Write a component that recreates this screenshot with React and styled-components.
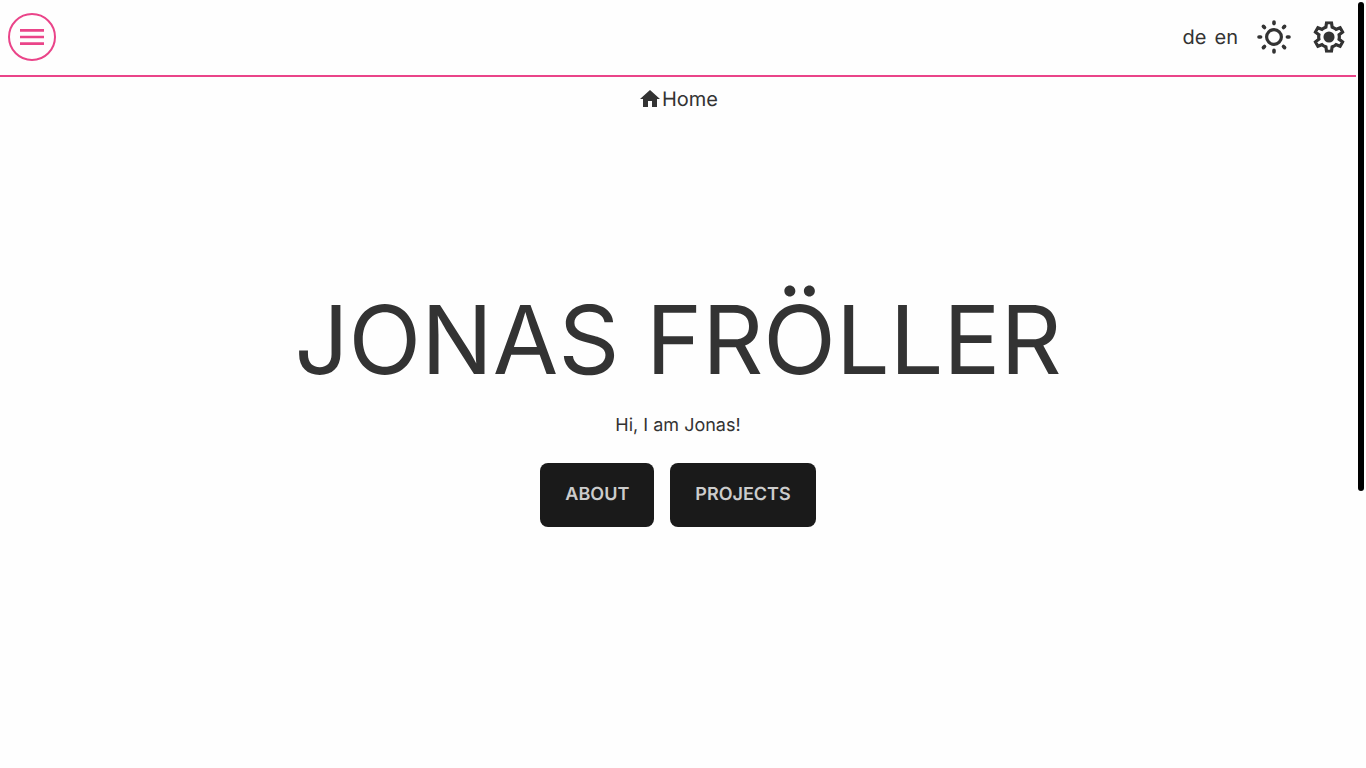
import React from 'react'
import styled, { createGlobalStyle } from 'styled-components'
import { MdHome, MdMenu } from 'react-icons/md'

const GlobalStyle = createGlobalStyle`
    * {
        box-sizing: border-box;
    }
    body {
        margin: 0;
        background-color: #fefefe;
        color: #333;
        font-family: Inter, "Liberation Sans", sans-serif;
        text-rendering: geometricPrecision;
    }
    h1, p {
        margin: 0;
    }
`;

const Container = styled.div`
    display: flex;
    height: 100vh;
    overflow: hidden;
`;

const Page = styled.div`
    flex: 1;
    display: flex;
    flex-direction: column;
`;

const ScrollTrack = styled.div`
    width: 10px;
    padding: 2px;
`;

const ScrollThumb = styled.div`
    height: 64%;
    border-radius: 3px;
    background-color: #000;
`;

const Header = styled.header`
    display: flex;
    align-items: center;
    justify-content: space-between;
    padding: 13px 8px 14px;
    border-bottom: 2px solid #ea4489;
`;

const MenuButton = styled.button`
    display: flex;
    align-items: center;
    justify-content: center;
    width: 48px;
    height: 48px;
    padding: 0;
    border: 2px solid #ea4489;
    border-radius: 50%;
    background: none;
    color: #ea4489;
    font-size: 32px;
    cursor: pointer;
`;

const Tools = styled.div`
    display: flex;
    align-items: center;
    gap: 17px;
`;

const Languages = styled.nav`
    display: flex;
    gap: 8px;
`;

const TextLink = styled.a`
    display: flex;
    align-items: center;
    color: inherit;
    font-size: 20px;
    line-height: 28px;
    text-decoration: none;
`;

const IconButton = styled.button`
    display: flex;
    padding: 0;
    border: none;
    background: none;
    color: inherit;
    cursor: pointer;
`;

const Breadcrumb = styled.nav`
    display: flex;
    justify-content: center;
    padding-top: 8px;
`;

const HomeIcon = styled(MdHome)`
    font-size: 24px;
`;

const Hero = styled.main`
    flex: 1;
    display: flex;
    flex-direction: column;
    align-items: center;
    justify-content: center;
    padding-bottom: 71px;
`;

const Title = styled.h1`
    font-size: 95px;
    font-weight: 400;
    line-height: 112px;
    text-transform: uppercase;
`;

const Desc = styled.p`
    margin-top: 16px;
    font-size: 18px;
    line-height: 28px;
`;

const Actions = styled.div`
    display: flex;
    gap: 16px;
    margin-top: 23px;
`;

const Button = styled.a`
    padding: 18px 25px;
    border-radius: 8px;
    background-color: #1a1a1a;
    color: #ccc;
    font-size: 18px;
    font-weight: 600;
    line-height: 28px;
    text-decoration: none;
    text-transform: uppercase;
`;

const angles = [0, 45, 90, 135, 180, 225, 270, 315];

const gear = 'M19.44 12.99c.06-.34.09-.67.09-1.01 0-.34-.03-.67-.08-.99l2.45-1.9-2.43-4.22-2.87 1.16c-.52-.4-1.09-.73-1.7-.99L14.44 2H9.57l-.44 3.07c-.61.26-1.18.59-1.7.99L4.56 4.89 2.12 9.11l2.44 1.9c-.05.32-.07.65-.07.99 0 .34.03.67.08.97l-2.44 1.91 2.43 4.2 2.88-1.15c.52.4 1.09.74 1.7 1L9.58 22h4.85l.44-3.07c.61-.26 1.19-.6 1.71-1l2.88 1.15 2.43-4.2z';

const SunIcon = () => (
    <svg width="38" height="38" viewBox="-19 -19 38 38" fill="none" stroke="currentColor">
        <circle r="7.4" strokeWidth="3.2" />
        {angles.map((angle) => (
            <path key={angle} d="M0-15v1.6" strokeWidth="3.6" strokeLinecap="round" transform={`rotate(${angle})`} />
        ))}
    </svg>
);

const GearIcon = () => (
    <svg width="38" height="38" viewBox="0 0 24 24">
        <clipPath id="gear-edge">
            <path d={gear} />
        </clipPath>
        <path d={gear} fill="none" stroke="currentColor" strokeWidth="4" clipPath="url(#gear-edge)" />
        <circle cx="12" cy="12" r="3.5" fill="currentColor" />
    </svg>
);

const App = () => {
  return (
    <>
        <GlobalStyle />
        <Container>
            <Page>
                <Header>
                    <MenuButton aria-label="Menu"><MdMenu /></MenuButton>
                    <Tools>
                        <Languages>
                            <TextLink href="#de">de</TextLink>
                            <TextLink href="#en">en</TextLink>
                        </Languages>
                        <IconButton aria-label="Theme"><SunIcon /></IconButton>
                        <IconButton aria-label="Settings"><GearIcon /></IconButton>
                    </Tools>
                </Header>
                <Breadcrumb>
                    <TextLink href="#home"><HomeIcon />Home</TextLink>
                </Breadcrumb>
                <Hero>
                    <Title>Jonas Fröller</Title>
                    <Desc>Hi, I am Jonas!</Desc>
                    <Actions>
                        <Button href="#about">About</Button>
                        <Button href="#projects">Projects</Button>
                    </Actions>
                </Hero>
            </Page>
            <ScrollTrack>
                <ScrollThumb />
            </ScrollTrack>
        </Container>
    </>
  )
}

export default App
